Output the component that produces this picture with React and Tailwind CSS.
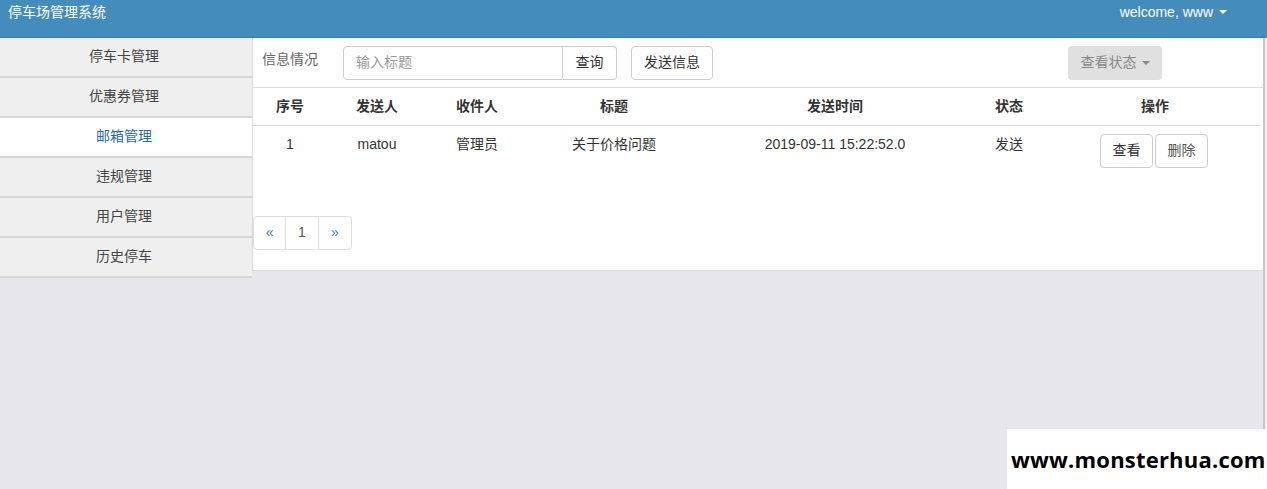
import React from "react";

const font = { fontFamily: '"Liberation Sans", "Noto Sans CJK SC", Arial, sans-serif' };

function Caret({ className = "" }) {
  return (
    <span
      className={"inline-block w-0 h-0 border-l-[4px] border-r-[4px] border-t-[4px] border-l-transparent border-r-transparent align-middle " + className}
    />
  );
}

const menu = ["停车卡管理", "优惠券管理", "邮箱管理", "违规管理", "用户管理", "历史停车"];

export default function App() {
  return (
    <div className="relative w-[1267px] h-[489px] overflow-hidden bg-[#e7e7eb] text-[14px] text-[#333]" style={font}>
      <div className="h-[38px] bg-[#448cbb] flex items-start justify-between text-white border-b border-[#3a7fae]">
        <div className="pl-[8px] pt-[2px] text-[14px] leading-[20px]">停车场管理系统</div>
        <div className="pr-[40px] pt-[2px] text-[14px] leading-[20px] flex items-center gap-[6px]">
          welcome, www <Caret className="border-t-white" />
        </div>
      </div>
      <div className="flex items-start">
        <div className="w-[252px] flex flex-col">
          {menu.map((m, i) => (
            <div
              key={m}
              className={
                "h-[40px] flex items-center justify-center border-b-[2px] border-[#d6d6d6] " +
                (i === 2 ? "bg-white text-[#2a6aa0]" : "bg-[#efefef] text-[#444]")
              }
            >
              <span className="pr-[4px] -mt-[2px]">{m}</span>
            </div>
          ))}
        </div>
        <div className="w-[1011px] pb-[20px] bg-white border-l border-b border-[#d8d8d8] flex flex-col">
          <div className="h-[50px] flex items-center pl-[9px] pr-[101px] border-b border-[#dddddd]">
            <span className="text-[#666] mr-[25px] -mt-[6px]">信息情况</span>
            <div className="flex h-[34px]">
              <div className="w-[220px] h-full border border-[#cccccc] rounded-l-[4px] flex items-center pl-[12px] text-[#999]">
                输入标题
              </div>
              <div className="w-[54px] h-full border border-l-0 border-[#cccccc] rounded-r-[4px] flex items-center justify-center">
                查询
              </div>
            </div>
            <div className="ml-[14px] w-[82px] h-[34px] border border-[#cccccc] rounded-[4px] flex items-center justify-center">
              发送信息
            </div>
            <div className="ml-auto w-[94px] h-[34px] rounded-[4px] bg-[#e0e0e0] text-[#888] flex items-center justify-center gap-[5px]">
              查看状态 <Caret className="border-t-[#888]" />
            </div>
          </div>
          <table className="w-[1008px] table-fixed border-collapse mb-[20px]">
            <colgroup>
              <col className="w-[74px]" />
              <col className="w-[100px]" />
              <col className="w-[100px]" />
              <col className="w-[174px]" />
              <col className="w-[268px]" />
              <col className="w-[80px]" />
              <col className="w-[212px]" />
            </colgroup>
            <thead>
              <tr className="h-[37px] border-b border-[#dddddd] font-bold text-[#333]">
                {["序号", "发送人", "收件人", "标题", "发送时间", "状态", "操作"].map((h) => (
                  <th key={h} className="text-center font-bold p-0">{h}</th>
                ))}
              </tr>
            </thead>
            <tbody>
              <tr className="align-top">
                <td className="text-center pt-[8px] leading-[20px]">1</td>
                <td className="text-center pt-[8px] leading-[20px]">matou</td>
                <td className="text-center pt-[8px] leading-[20px]">管理员</td>
                <td className="text-center pt-[8px] leading-[20px]">关于价格问题</td>
                <td className="text-center pt-[8px] leading-[20px]">2019-09-11 15:22:52.0</td>
                <td className="text-center pt-[8px] leading-[20px]">发送</td>
                <td className="pt-[8px] pb-[8px]">
                  <div className="flex justify-center gap-[2px] pr-[2px]">
                    <div className="w-[53px] h-[34px] border border-[#cccccc] rounded-[4px] flex items-center justify-center">查看</div>
                    <div className="w-[53px] h-[34px] border border-[#cccccc] rounded-[4px] flex items-center justify-center text-[#555]">删除</div>
                  </div>
                </td>
              </tr>
            </tbody>
          </table>
          <div className="mt-[20px] flex h-[34px] w-[99px] border border-[#dddddd] rounded-[4px] text-[#337ab7]">
            <div className="w-[33px] flex items-center justify-center border-r border-[#dddddd]">«</div>
            <div className="w-[33px] flex items-center justify-center border-r border-[#dddddd] text-[#555]">1</div>
            <div className="w-[33px] flex items-center justify-center">»</div>
          </div>
        </div>
        <div className="flex-1 h-[451px] border-l-2 border-[#c8c8c8] bg-[#f3f3f3]" />
      </div>
      <div className="absolute left-[1007px] top-[429px] w-[260px] h-[60px] bg-white flex items-center pl-[4px]">
        <span className="text-[22px] font-bold text-black tracking-[0.2px]" style={{ fontFamily: '"Open Sans", "Noto Sans", sans-serif' }}>
          www.monsterhua.com
        </span>
      </div>
    </div>
  );
}
